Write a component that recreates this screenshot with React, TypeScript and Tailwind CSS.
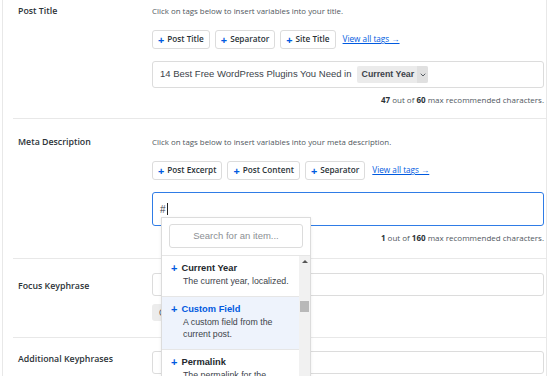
import { ChevronDown } from "lucide-react";

const ui = { fontFamily: '"Open Sans", "Noto Sans", sans-serif' };
const arial = { fontFamily: '"Liberation Sans", Arial, sans-serif' };

function Tag({ label }: { label: string }) {
    return (
        <span className="flex h-[19px] items-center gap-[3px] rounded-[3px] border border-[#dcdcdc] bg-white px-[5px] text-[8.2px] font-semibold text-[#2c3338]">
            <span className="text-[11px] font-bold leading-none text-[#005ae0]">+</span>
            {label}
        </span>
    );
}

function Tags({ items }: { items: string[] }) {
    return (
        <div className="flex items-center gap-[5px]">
            {items.map((t) => (
                <Tag key={t} label={t} />
            ))}
            <span className="ml-[2px] text-[8.2px] text-[#005ae0] underline">View all tags →</span>
        </div>
    );
}

function Row({
    label,
    children,
    className,
    labelClass,
}: {
    label: string;
    children: React.ReactNode;
    className?: string;
    labelClass?: string;
}) {
    return (
        <div className={`ml-[10px] flex border-b border-[#e8e8e8] ${className ?? ""}`}>
            <div className={`w-[139px] shrink-0 pl-[5px] text-[8.8px] font-semibold leading-[14px] text-[#2c3338] ${labelClass ?? ""}`}>
                {label}
            </div>
            <div className="w-[392px] shrink-0">{children}</div>
        </div>
    );
}

function Item({
    title,
    desc,
    active,
}: {
    title: string;
    desc: string[];
    active?: boolean;
}) {
    return (
        <div
            className={`border-b border-[#e6e6e6] pb-[9px] pl-[9px] pt-[6px] ${active ? "bg-[#eef3fc]" : "bg-white"}`}
            style={arial}
        >
            <div
                className={`flex items-center gap-[4px] text-[9.3px] font-bold leading-[13px] ${active ? "text-[#005ae0]" : "text-[#23282d]"}`}
            >
                <span className="text-[11px] font-bold text-[#005ae0]">+</span>
                {title}
            </div>
            {desc.map((d) => (
                <div key={d} className="whitespace-nowrap pl-[12px] text-[8.8px] leading-[12px] text-[#3c434a]">
                    {d}
                </div>
            ))}
        </div>
    );
}

export default function App() {
    return (
        <div className="relative h-[376px] w-[550px] overflow-hidden bg-white" style={ui}>
            <div className="ml-[2px] w-[545px] border-x border-[#e8e8e8]">
                <Row label="Post Title" className="pt-[4px]">
                    <div className="text-[7.9px] leading-[14px] text-[#50575e]">
                        Click on tags below to insert variables into your title.
                    </div>
                    <div className="mt-[12px]">
                        <Tags items={["Post Title", "Separator", "Site Title"]} />
                    </div>
                    <div className="mt-[12px] flex h-[27px] items-center rounded-[3px] border border-[#dcdcdc] pl-[7px] text-[9.5px] text-[#3c434a]" style={arial}>
                        14 Best Free WordPress Plugins You Need in
                        <span className="ml-[5px] flex h-[17px] items-center rounded-[2px] bg-[#ebebeb] pl-[5px] text-[8.8px] font-bold text-[#3c434a]">
                            Current Year
                            <span className="ml-[3px] flex h-full w-[11px] items-center justify-center rounded-r-[2px] bg-[#e0e0e0]">
                                <ChevronDown size={8} strokeWidth={2.5} />
                            </span>
                        </span>
                    </div>
                    <div className="mt-[6px] pb-[12px] text-right text-[8px] text-[#50575e]">
                        <b className="text-[#2c3338]">47</b> out of <b className="text-[#2c3338]">60</b> max recommended characters.
                    </div>
                </Row>
                <Row label="Meta Description" className="pt-[16px]">
                    <div className="text-[7.9px] leading-[14px] text-[#50575e]">
                        Click on tags below to insert variables into your meta description.
                    </div>
                    <div className="mt-[12px]">
                        <Tags items={["Post Excerpt", "Post Content", "Separator"]} />
                    </div>
                    <div className="mt-[12px] flex h-[34px] items-center rounded-[3px] border-[1.5px] border-[#2f7ce6] pl-[7px] text-[10px] text-[#3c434a]" style={arial}>
                        #<span className="ml-[1px] h-[12px] w-px bg-[#222]" />
                    </div>
                    <div className="mt-[6px] pb-[14px] text-right text-[8px] text-[#50575e]">
                        <b className="text-[#2c3338]">1</b> out of <b className="text-[#2c3338]">160</b> max recommended characters.
                    </div>
                </Row>
                <Row label="Focus Keyphrase" className="pt-[14px]" labelClass="mt-[6px]">
                    <div className="h-[23px] rounded-[3px] border border-[#dcdcdc]" />
                    <div className="mt-[8px] h-[17px] w-[120px] rounded-[3px] bg-[#ececec] pl-[7px] text-[8.5px] leading-[17px] text-[#3c434a]">
                        Get Additional Keyphrases
                    </div>
                    <div className="h-[16px]" />
                </Row>
                <Row label="Additional Keyphrases" className="pt-[14px]">
                    <div className="-mt-[1px] h-[23px] rounded-[3px] border border-[#dcdcdc]" />
                    <div className="h-[20px]" />
                </Row>
            </div>

            <div className="absolute left-[161px] top-[217px] h-[170px] w-[150px] border border-[#dcdcdc] bg-white shadow-[0_1px_3px_rgba(0,0,0,0.08)]">
                <div className="border-b border-[#e6e6e6] px-[7px] pb-[7px] pt-[6px]">
                    <div className="flex h-[24px] items-center justify-center rounded-[3px] border border-[#dcdcdc] text-[9.5px] text-[#8c8f94]" style={arial}>
                        Search for an item...
                    </div>
                </div>
                <div className="flex">
                    <div className="w-[137px]">
                        <Item title="Current Year" desc={["The current year, localized."]} />
                        <Item title="Custom Field" desc={["A custom field from the", "current post."]} active />
                        <Item title="Permalink" desc={["The permalink for the", "current post."]} />
                    </div>
                    <div className="flex w-[11px] flex-col items-center bg-[#f1f1f1]">
                        <span className="mt-[4px] h-0 w-0 border-x-[3px] border-b-[3px] border-x-transparent border-b-[#555]" />
                        <span className="mt-[38px] h-[11px] w-[9px] bg-[#b8b8b8]" />
                    </div>
                </div>
            </div>
        </div>
    );
}
